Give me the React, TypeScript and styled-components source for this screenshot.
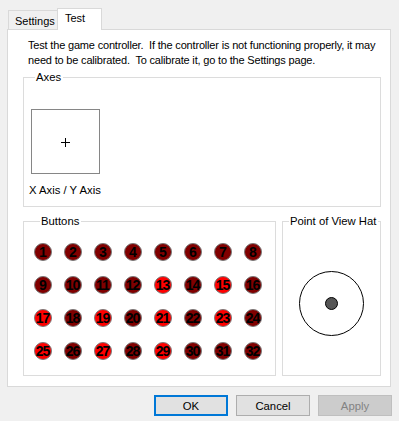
import React from 'react'
import styled, { createGlobalStyle } from 'styled-components'

const GlobalStyle = createGlobalStyle`
  html, body {
    margin: 0;
    padding: 0;
    background: #f0f0f0;
  }
  body {
    font-family: "Liberation Sans", Arial, sans-serif;
    font-size: 11px;
    color: #000;
  }
`

const pressed = new Set([13, 15, 17, 19, 21, 23, 25, 27, 29])
const buttons = Array.from({ length: 32 }, (_, i) => i + 1)

const App: React.FC = () => (
  <>
    <GlobalStyle />
    <Window>
      <TabStrip>
        <Tab>Settings</Tab>
        <Tab active>Test</Tab>
      </TabStrip>
      <Panel>
        <Intro>
          Test the game controller.&nbsp; If the controller is not functioning properly, it may
          <br />
          need to be calibrated.&nbsp; To calibrate it, go to the Settings page.
        </Intro>
        <AxesGroup>
          <Legend>Axes</Legend>
          <AxisBox>
            <Cross />
          </AxisBox>
          <Caption>X Axis / Y Axis</Caption>
        </AxesGroup>
        <LowerRow>
          <ButtonsGroup>
            <Legend>Buttons</Legend>
            <ButtonGrid>
              {buttons.map(n => (
                <Lamp key={n} on={pressed.has(n)}>{n}</Lamp>
              ))}
            </ButtonGrid>
          </ButtonsGroup>
          <HatGroup>
            <Legend>Point of View Hat</Legend>
            <HatArea>
              <HatRing>
                <HatDot />
              </HatRing>
            </HatArea>
          </HatGroup>
        </LowerRow>
      </Panel>
      <Footer>
        <DialogButton primary>OK</DialogButton>
        <DialogButton>Cancel</DialogButton>
        <DialogButton disabled>Apply</DialogButton>
      </Footer>
    </Window>
  </>
)

const Window = styled.div`
  width: 399px;
  height: 421px;
  box-sizing: border-box;
  padding-top: 8px;
  display: flex;
  flex-direction: column;
  background: #f0f0f0;
  overflow: hidden;
`

const TabStrip = styled.div`
  display: flex;
  align-items: flex-end;
  height: 21px;
  margin-left: 8px;
`

const Tab = styled.div<{ active?: boolean }>`
  position: relative;
  z-index: 1;
  box-sizing: border-box;
  border: 1px solid #d9d9d9;
  border-bottom: none;
  height: ${p => (p.active ? '22px' : '19px')};
  margin-bottom: ${p => (p.active ? '-1px' : '0')};
  width: ${p => (p.active ? '45px' : '49px')};
  padding: ${p => (p.active ? '3px 0 0 7px' : '4px 0 0 6px')};
  line-height: 13px;
  font-size: 11px;
  white-space: nowrap;
  background: ${p => (p.active ? '#fff' : '#f0f0f0')};
  border-right: ${p => (p.active ? '1px solid #d9d9d9' : 'none')};
`

const Panel = styled.div`
  box-sizing: border-box;
  width: 384px;
  height: 358px;
  margin-left: 7px;
  padding: 8px 9px 0 15px;
  border: 1px solid #d9d9d9;
  background: #fff;
  display: flex;
  flex-direction: column;
`

const Intro = styled.p`
  margin: 0 0 2px 5px;
  line-height: 15px;
  font-size: 11px;
  letter-spacing: -0.18px;
  white-space: nowrap;
`

const Group = styled.fieldset`
  margin: 0;
  padding: 0;
  min-width: 0;
  border: 1px solid #dcdcdc;
  box-sizing: border-box;
`

const Legend = styled.legend`
  margin-left: 6px;
  padding: 0 2px 0 1px;
  line-height: 15px;
  font-size: 11.3px;
  white-space: nowrap;
`

const AxesGroup = styled(Group)`
  padding: 24px 0 8px 5px;
`

const AxisBox = styled.div`
  width: 69px;
  height: 65px;
  box-sizing: border-box;
  margin-left: 2px;
  border: 1px solid #868686;
  display: flex;
  align-items: center;
  justify-content: center;
`

const Cross = styled.div`
  position: relative;
  width: 9px;
  height: 9px;
  margin: 1px 1px 0 0;

  &::before,
  &::after {
    content: '';
    position: absolute;
    background: #000;
  }
  &::before {
    left: 0;
    top: 4px;
    width: 9px;
    height: 1px;
  }
  &::after {
    left: 4px;
    top: 0;
    width: 1px;
    height: 9px;
  }
`

const Caption = styled.div`
  margin-top: 9px;
  line-height: 15px;
  font-size: 11.3px;
`

const LowerRow = styled.div`
  display: flex;
  gap: 6px;
  margin-top: 7px;
`

const ButtonsGroup = styled(Group)`
  width: 253px;
  height: 162px;
  padding: 14px 0 0 10px;
`

const ButtonGrid = styled.div`
  display: grid;
  grid-template-columns: repeat(8, 18px);
  grid-auto-rows: 18px;
  column-gap: 12px;
  row-gap: 15px;
`

const Lamp = styled.div<{ on: boolean }>`
  width: 18px;
  height: 18px;
  box-sizing: border-box;
  border-radius: 50%;
  border: 1.5px solid #7a7a7a;
  background: ${p => (p.on ? '#ff0000' : '#800000')};
  display: flex;
  align-items: center;
  justify-content: center;
  font-weight: bold;
  font-size: 14px;
  letter-spacing: -1px;
  text-indent: -1px;
  line-height: 1;
  color: #000;
  white-space: nowrap;
`

const HatGroup = styled(Group)`
  width: 99px;
  height: 162px;
`

const HatArea = styled.div`
  height: 146px;
  display: flex;
  align-items: center;
  justify-content: center;
`

const HatRing = styled.div`
  width: 65px;
  height: 65px;
  box-sizing: border-box;
  margin: 2px 1px 0 0;
  border: 1px solid #000;
  border-radius: 50%;
  display: flex;
  align-items: center;
  justify-content: center;
`

const HatDot = styled.div`
  width: 13px;
  height: 13px;
  box-sizing: border-box;
  border-radius: 50%;
  border: 1px solid #000;
  background: #555;
`

const Footer = styled.div`
  display: flex;
  justify-content: flex-end;
  gap: 8px;
  margin-top: 8px;
  padding-right: 7px;
`

const DialogButton = styled.button<{ primary?: boolean }>`
  width: 74px;
  height: 21px;
  box-sizing: border-box;
  padding: 0;
  font-family: inherit;
  font-size: 11.3px;
  color: #000;
  background: #e1e1e1;
  border: ${p => (p.primary ? '2px solid #0078d7' : '1px solid #adadad')};

  &:disabled {
    background: #cccccc;
    border-color: #bfbfbf;
    color: #838383;
  }
`

export default App
